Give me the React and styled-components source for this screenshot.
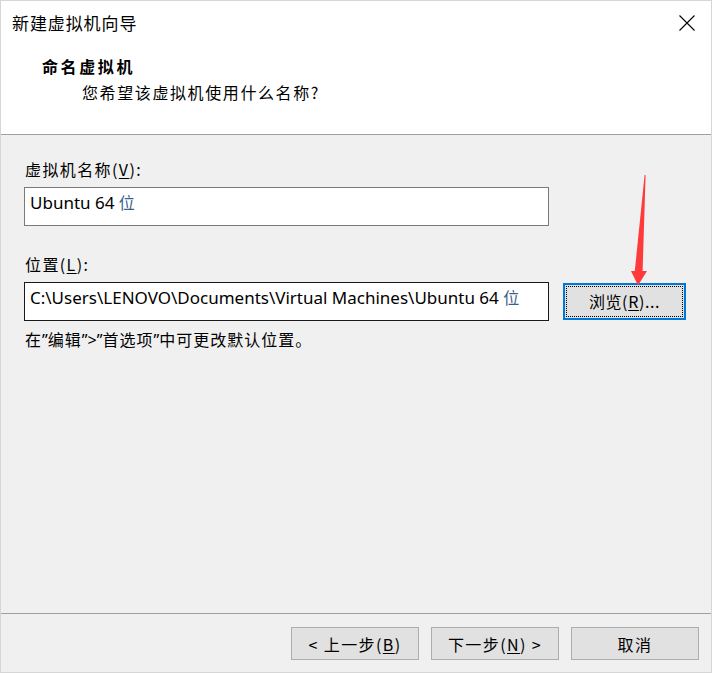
import styled, { createGlobalStyle } from "styled-components";

const GlobalStyle = createGlobalStyle`
  html, body {
    margin: 0;
    padding: 0;
    background: #ffffff;
  }
`

const latin = `"Noto Sans", "Noto Sans CJK SC", sans-serif`
const cjk = `"Noto Sans CJK SC", "Noto Sans", sans-serif`

const App = () => {
  return (
    <>
      <GlobalStyle />
      <Window>
        <Header>
          <TitleBar>
            <Title>新建虚拟机向导</Title>
            <CloseButton aria-label="close">
              <svg width="16" height="16" viewBox="0 0 16 16">
                <path d="M0.5 0.5 L15.5 15.5 M15.5 0.5 L0.5 15.5" stroke="#000" strokeWidth="1.1" fill="none" />
              </svg>
            </CloseButton>
          </TitleBar>
          <Heading>命名虚拟机</Heading>
          <SubHeading>您希望该虚拟机使用什么名称?</SubHeading>
        </Header>

        <Body>
          <Label>虚拟机名称(<u>V</u>):</Label>
          <Field>
            <TextBox>Ubuntu 64 <Cjk>位</Cjk></TextBox>
          </Field>

          <Label $top={26}>位置(<u>L</u>):</Label>
          <Field>
            <TextBox $dark>C:\Users\LENOVO\Documents\Virtual Machines\Ubuntu 64 <Cjk>位</Cjk></TextBox>
            <BrowseButton>
              <FocusRing>浏览(<u>R</u>)...</FocusRing>
            </BrowseButton>
          </Field>

          <Hint>
            在<Quote>”</Quote>编辑<Quote>”&gt;”</Quote>首选项<Quote>”</Quote>中可更改默认位置。
          </Hint>
        </Body>

        <Footer>
          <Button>&lt; 上一步(<u>B</u>)</Button>
          <Button>下一步(<u>N</u>) &gt;</Button>
          <Button>取消</Button>
        </Footer>

        <Arrow width="712" height="673" viewBox="0 0 712 673">
          <polygon
            points="645.6,175 642.6,271 647,271 638,285.5 631,271 634.8,271 644.6,175"
            fill="#ff3a3a"
          />
        </Arrow>
      </Window>
    </>
  )
}

const Window = styled.div`
  position: relative;
  width: 712px;
  height: 673px;
  box-sizing: border-box;
  border: 1px solid #d6d6d6;
  background: #f0f0f0;
  display: flex;
  flex-direction: column;
  overflow: hidden;
`

const Header = styled.div`
  background: #ffffff;
  height: 133px;
  border-bottom: 1px solid #a0a0a0;
  display: flex;
  flex-direction: column;
`

const TitleBar = styled.div`
  height: 44px;
  display: flex;
  align-items: center;
  justify-content: space-between;
  padding: 0 16px 0 11px;
`

const Title = styled.div`
  font-family: ${cjk};
  font-size: 17px;
  letter-spacing: 0.9px;
  color: #000;
  margin-top: -1px;
`

const CloseButton = styled.div`
  width: 16px;
  height: 16px;
  display: flex;
  margin-top: -1px;
`

const Heading = styled.div`
  font-family: ${cjk};
  font-weight: 700;
  font-size: 16px;
  letter-spacing: 2.6px;
  color: #000;
  padding-left: 41px;
  margin-top: 9px;
  line-height: 24px;
`

const SubHeading = styled.div`
  font-family: ${cjk};
  font-size: 16px;
  letter-spacing: 1.6px;
  color: #000;
  padding-left: 81px;
  margin-top: 2px;
  line-height: 24px;
`

const Body = styled.div`
  flex: 1;
  padding: 22px 0 0 23px;
  border-bottom: 1px solid #a0a0a0;
  display: flex;
  flex-direction: column;
`

const Label = styled.div`
  font-family: ${cjk};
  font-size: 16px;
  letter-spacing: 1.4px;
  color: #000;
  line-height: 24px;
  margin-top: ${({ $top = 0 }) => $top}px;
  margin-left: 1px;
  margin-bottom: 6px;

  u {
    text-underline-offset: 2px;
  }
`

const Field = styled.div`
  display: flex;
  align-items: center;
  gap: 14px;
`

const TextBox = styled.div`
  width: 525px;
  height: 39px;
  box-sizing: border-box;
  background: #ffffff;
  border: 1px solid ${({ $dark }) => ($dark ? '#1a1a1a' : '#7a7a7a')};
  padding: 2px 0 0 5px;
  font-family: ${latin};
  font-size: 17px;
  color: #000;
  white-space: nowrap;
  overflow: hidden;
  line-height: 24px;
`

const Cjk = styled.span`
  font-family: ${cjk};
  font-size: 16px;
  color: #3a5f8a;
`

const BrowseButton = styled.div`
  width: 123px;
  height: 37px;
  box-sizing: border-box;
  border: 2px solid #0078d7;
  background: #e1e1e1;
  padding: 1px;
  display: flex;
`

const FocusRing = styled.div`
  flex: 1;
  border: 1px dotted #000;
  display: flex;
  align-items: center;
  justify-content: center;
  font-family: ${cjk};
  font-size: 16px;
  letter-spacing: 0.6px;
  color: #000;
  padding-bottom: 1px;

  u {
    text-underline-offset: 2px;
  }
`

const Hint = styled.div`
  font-family: ${cjk};
  font-size: 16px;
  letter-spacing: 1px;
  color: #000;
  line-height: 24px;
  margin-top: 6px;
  margin-left: 1px;
`

const Quote = styled.span`
  font-family: ${latin};
  letter-spacing: 0;
`

const Footer = styled.div`
  height: 58px;
  display: flex;
  justify-content: flex-end;
  align-items: flex-start;
  gap: 12px;
  padding: 13px 12px 0 0;
  box-sizing: border-box;
`

const Button = styled.div`
  width: 128px;
  height: 33px;
  box-sizing: border-box;
  border: 1px solid #adadad;
  background: #e1e1e1;
  display: flex;
  align-items: center;
  justify-content: center;
  font-family: ${cjk};
  font-size: 16px;
  letter-spacing: 1.4px;
  color: #000;

  u {
    text-underline-offset: 2px;
  }
`

const Arrow = styled.svg`
  position: absolute;
  top: -1px;
  left: -1px;
  pointer-events: none;
`

export default App;
